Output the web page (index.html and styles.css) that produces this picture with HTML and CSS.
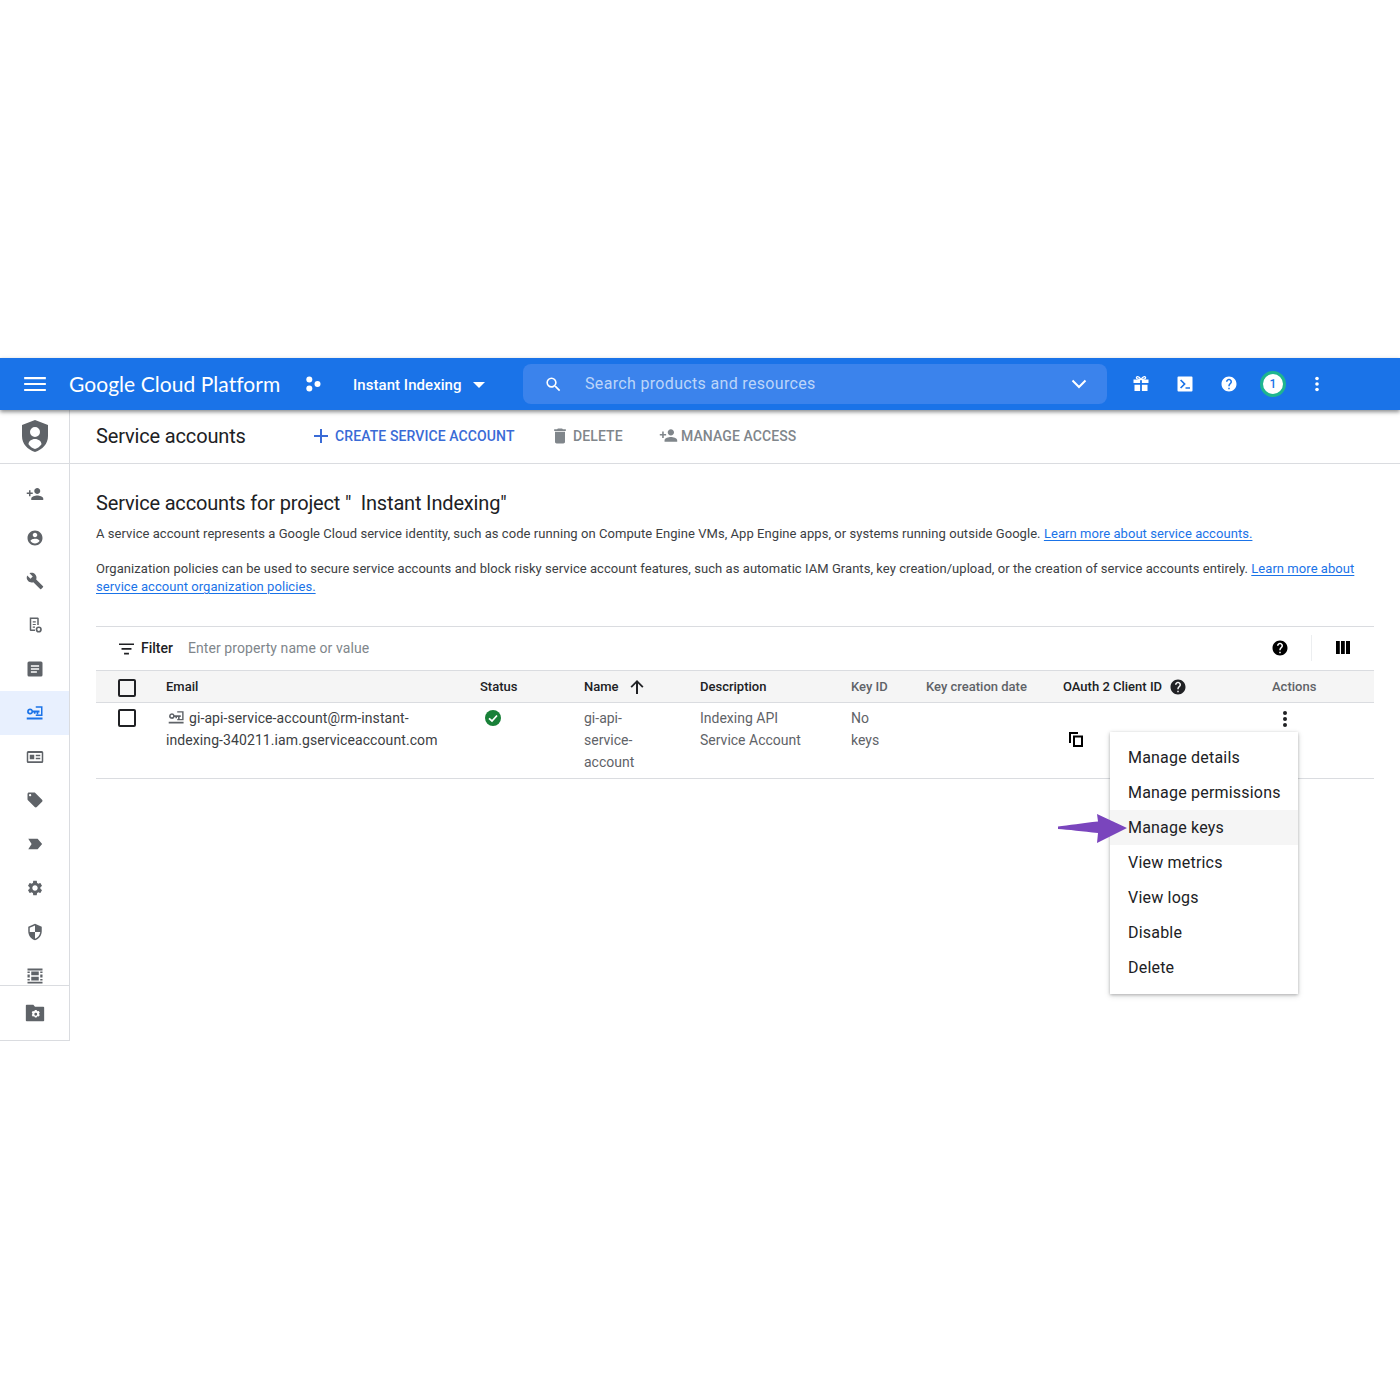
FILE: index.html
```html
<!DOCTYPE html>
<html lang="en">
<head>
<meta charset="utf-8">
<title>Service accounts</title>
<link rel="stylesheet" href="styles.css">
</head>
<body>
<svg class="defs" width="0" height="0" aria-hidden="true">
  <symbol id="i-help" viewBox="0 0 24 24"><path d="M12 2C6.48 2 2 6.48 2 12s4.48 10 10 10 10-4.48 10-10S17.52 2 12 2zm1 17h-2v-2h2v2zm2.07-7.75l-.9.92C13.45 12.9 13 13.5 13 15h-2v-.5c0-1.1.45-2.1 1.17-2.83l1.24-1.26c.37-.36.59-.86.59-1.41 0-1.1-.9-2-2-2s-2 .9-2 2H8c0-2.21 1.79-4 4-4s4 1.79 4 4c0 .88-.36 1.68-.93 2.25z"/></symbol>
  <symbol id="i-padd" viewBox="0 0 24 24"><path d="M15 12c2.21 0 4-1.79 4-4s-1.79-4-4-4-4 1.79-4 4 1.79 4 4 4zm-9-2V7H4v3H1v2h3v3h2v-3h3v-2H6zm9 4c-2.67 0-8 1.34-8 4v2h16v-2c0-2.66-5.33-4-8-4z"/></symbol>
  <symbol id="i-key" viewBox="0 0 24 24"><path d="M13 3h9v13h-9v-2h7V5h-7zM1 18h21v2.5H1z"/><path fill-rule="evenodd" d="M5.5 6a4 4 0 0 1 3.8 2.8H18v2.4h-1.6V14h-2.2v-2.8h-1.5V13h-2.2v-1.8H9.3A4 4 0 1 1 5.500 6zm0 2.200a1.800 1.800 0 1 0 0 3.600 1.800 1.800 0 0 0 0-3.600z"/></symbol>
</svg>

<div class="page">
  <header class="topbar">
    <svg class="ic-menu" viewBox="0 0 24 24"><path d="M2 18.500h20v-2H2zm0-5.500h20v-2H2zM2 5.500v2h20v-2z"/></svg>
    <span class="brand">Google Cloud Platform</span>
    <svg class="ic-dots" viewBox="0 0 16 16"><circle cx="4.300" cy="3.500" r="3"/><circle cx="4.300" cy="12.500" r="3"/><circle cx="12.500" cy="8" r="3"/></svg>
    <span class="project">Instant Indexing</span>
    <span class="caret"></span>
    <div class="search">
      <svg class="ic-search" viewBox="0 0 24 24"><path d="M15.500 14h-.79l-.28-.27A6.471 6.471 0 0 0 16 9.500 6.500 6.500 0 1 0 9.500 16c1.610 0 3.090-.59 4.230-1.570l.27.28v.79l5 4.990L20.490 19l-4.990-5zm-6 0C7.010 14 5 11.990 5 9.500S7.010 5 9.500 5 14 7.010 14 9.500 11.990 14 9.500 14z"/></svg>
      <span class="search-text">Search products and resources</span>
      <svg class="ic-chev" viewBox="0 0 16 10"><path d="M1.500 1.500 8 8l6.500-6.500" fill="none" stroke="#fff" stroke-width="2"/></svg>
    </div>
    <div class="top-icons">
      <svg class="top-ic" viewBox="0 0 18 18"><path d="M1.500 4.500h6.600v3.600H1.500zm8.400 0h6.600v3.600H9.900zM2.500 9.700h5.600v6.300H2.500zm7.400 0h5.600v6.300H9.900z"/><path d="M9 4.500C7 1 4 1 4.500 3.200 4.800 4.400 7 4.500 9 4.500zm0 0c2-3.500 5-3.500 4.500-1.300-.3 1.200-2.500 1.300-4.500 1.300z" fill="none" stroke="#fff" stroke-width="1.300"/></svg>
      <svg class="top-ic" viewBox="0 0 18 18"><path fill-rule="evenodd" d="M2.500 1.500h13a1 1 0 0 1 1 1v13a1 1 0 0 1-1 1h-13a1 1 0 0 1-1-1v-13a1 1 0 0 1 1-1zM4 5.500 7.500 9 4 12.500l1.200 1.100L9.800 9 5.200 4.400zM9.500 12.200v1.500h4.500v-1.500z"/></svg>
      <svg class="top-ic" viewBox="0 0 24 24"><use href="#i-help"/></svg>
      <span class="badge">1</span>
      <svg class="top-ic" viewBox="0 0 18 18"><circle cx="9" cy="3.500" r="1.800"/><circle cx="9" cy="9" r="1.800"/><circle cx="9" cy="14.500" r="1.800"/></svg>
    </div>
  </header>

  <div class="layout">
    <nav class="rail">
      <div class="rail-head">
        <svg class="ic-shield" viewBox="0 0 28 34"><path fill-rule="evenodd" d="M14 1 1 6v11c0 8 5.500 13.500 13 16 7.500-2.500 13-8 13-16V6zM14 8a5 5 0 1 1 0 10 5 5 0 0 1 0-10zm0 12c3.600 0 6.500 2.500 6.500 5.200-1.500 2.200-3.800 3.900-6.500 4.800-2.700-.9-5-2.600-6.500-4.800C7.500 22.500 10.400 20 14 20z"/></svg>
      </div>
      <div class="rail-items">
        <a class="rail-item"><svg viewBox="0 0 24 24"><use href="#i-padd"/></svg></a>
        <a class="rail-item"><svg viewBox="0 0 24 24"><path d="M12 2C6.480 2 2 6.480 2 12s4.480 10 10 10 10-4.480 10-10S17.520 2 12 2zm0 3c1.660 0 3 1.340 3 3s-1.340 3-3 3-3-1.340-3-3 1.340-3 3-3zm0 14.200c-2.500 0-4.710-1.280-6-3.220.03-1.990 4-3.080 6-3.080 1.990 0 5.970 1.090 6 3.080-1.290 1.940-3.500 3.220-6 3.220z"/></svg></a>
        <a class="rail-item"><svg viewBox="0 0 24 24"><path d="M22.700 19l-9.100-9.100c.9-2.300.4-5-1.500-6.900-2-2-5-2.400-7.400-1.300L9 6 6 9 1.600 4.700C.4 7.100.9 10.100 2.900 12.100c1.900 1.900 4.600 2.400 6.900 1.500l9.100 9.100c.4.4 1 .4 1.400 0l2.300-2.300c.5-.4.5-1.100.1-1.400z"/></svg></a>
        <a class="rail-item"><svg viewBox="0 0 24 24"><path fill-rule="evenodd" d="M5 2h11l1 1v9h-2V4H7v14h5v2H6l-1-1zM9 7h4v1.500H9zm0 3.500h4V12H9zM9 14h3v1.500H9z"/><circle cx="17" cy="18" r="3" fill="none" stroke="#5f6368" stroke-width="2.200"/></svg></a>
        <a class="rail-item"><svg viewBox="0 0 24 24"><path fill-rule="evenodd" d="M4 2h16a2 2 0 0 1 2 2v16a2 2 0 0 1-2 2H4a2 2 0 0 1-2-2V4a2 2 0 0 1 2-2zm2.500 5v2h11V7zm0 4v2h11v-2zm0 4v2h8v-2z"/></svg></a>
        <a class="rail-item is-active"><svg viewBox="0 0 24 24"><use href="#i-key"/></svg></a>
        <a class="rail-item"><svg viewBox="0 0 24 24"><path fill-rule="evenodd" d="M3 4h18a2 2 0 0 1 2 2v12a2 2 0 0 1-2 2H3a2 2 0 0 1-2-2V6a2 2 0 0 1 2-2zm0 2.500v11h18v-11zM5 9h6v6H5zm8 0h6v2h-6zm0 4h6v2h-6z"/></svg></a>
        <a class="rail-item"><svg viewBox="0 0 24 24"><path d="M21.410 11.580l-9-9C12.050 2.220 11.550 2 11 2H4c-1.100 0-2 .9-2 2v7c0 .55.22 1.050.59 1.420l9 9c.36.36.86.58 1.410.58.55 0 1.050-.22 1.410-.59l7-7c.37-.36.59-.86.59-1.410 0-.55-.23-1.060-.59-1.420zM5.500 7C4.670 7 4 6.330 4 5.500S4.670 4 5.500 4 7 4.670 7 5.500 6.330 7 5.500 7z"/></svg></a>
        <a class="rail-item"><svg viewBox="0 0 24 24"><path d="M3 5h12.500l6 7-6 7H3l4.500-7z"/></svg></a>
        <a class="rail-item"><svg viewBox="0 0 24 24"><path d="M19.140 12.940c.04-.3.06-.61.06-.94 0-.32-.02-.64-.07-.94l2.030-1.580c.18-.14.23-.41.12-.61l-1.920-3.320c-.12-.22-.37-.29-.59-.22l-2.390.96c-.5-.38-1.030-.7-1.620-.94l-.36-2.540c-.04-.24-.24-.41-.48-.41h-3.840c-.24 0-.43.17-.47.41l-.36 2.540c-.59.24-1.130.57-1.620.94l-2.390-.96c-.22-.08-.47 0-.59.22L2.740 8.870c-.12.21-.08.47.12.61l2.030 1.580c-.05.3-.09.63-.09.94s.02.64.07.94l-2.030 1.580c-.18.14-.23.41-.12.61l1.920 3.320c.12.22.37.29.59.22l2.390-.96c.5.38 1.030.7 1.620.94l.36 2.540c.05.24.24.41.48.41h3.840c.24 0 .44-.17.47-.41l.36-2.540c.59-.24 1.130-.56 1.620-.94l2.390.96c.22.08.47 0 .59-.22l1.920-3.320c.12-.22.07-.47-.12-.61l-2.010-1.580zM12 15.600c-1.980 0-3.600-1.620-3.600-3.600s1.620-3.600 3.600-3.600 3.600 1.620 3.600 3.600-1.620 3.600-3.600 3.600z"/></svg></a>
        <a class="rail-item"><svg viewBox="0 0 24 24"><path d="M12 1L3 5v6c0 5.550 3.840 10.740 9 12 5.160-1.260 9-6.450 9-12V5l-9-4zm0 10.990h7c-.53 4.120-3.280 7.790-7 8.940V12H5V6.300l7-3.110v8.800z"/></svg></a>
        <a class="rail-item"><svg viewBox="0 0 24 24"><path d="M2 2h20v2.500H2zm0 17.500h20V22H2zM2 6h3v2H2zm17 0h3v2h-3zM2 16h3v2H2zm17 0h3v2h-3zM7 6h10v5H7zm0 7h10v5H7zM2 10h3v4H2zm17 0h3v4h-3z"/></svg></a>
      </div>
      <div class="rail-foot">
        <a class="rail-item"><svg viewBox="0 0 24 24"><path fill-rule="evenodd" d="M2 2h8l2 2.500h10a1 1 0 0 1 1 1V21a1 1 0 0 1-1 1H2a1 1 0 0 1-1-1V3a1 1 0 0 1 1-1zm10 6.500-1 1.500-1.800-.3-1.100 1.900 1.100 1.400-1.100 1.400 1.100 1.900 1.800-.3 1 1.500h1.800l1-1.500 1.800.3 1.100-1.900-1.100-1.400 1.100-1.400-1.100-1.900-1.800.3-1-1.500zm.9 3.300a1.700 1.700 0 1 1 0 3.400 1.700 1.700 0 0 1 0-3.400z"/></svg></a>
      </div>
    </nav>

    <main class="main">
      <div class="actionbar">
        <h1 class="page-title">Service accounts</h1>
        <button class="act act-create"><svg viewBox="0 0 14 14"><path d="M6 0h2v6h6v2H8v6H6V8H0V6h6z"/></svg>Create service account</button>
        <button class="act act-delete"><svg viewBox="0 0 24 24"><path d="M6 19c0 1.100.9 2 2 2h8c1.100 0 2-.9 2-2V7H6v12zM19 4h-3.500l-1-1h-5l-1 1H5v2h14V4z"/></svg>Delete</button>
        <button class="act act-access"><svg viewBox="0 0 24 24"><use href="#i-padd"/></svg>Manage access</button>
      </div>

      <div class="content">
        <h2 class="section-title">Service accounts for project "&nbsp; Instant Indexing"</h2>
        <p class="desc">A service account represents a Google Cloud service identity, such as code running on Compute Engine VMs, App Engine apps, or systems running outside Google. <a class="link">Learn more about service accounts.</a></p>
        <p class="desc desc-2">Organization policies can be used to secure service accounts and block risky service account features, such as automatic IAM Grants, key creation/upload, or the creation of service accounts entirely. <a class="link">Learn more about service account organization policies.</a></p>

        <div class="filter">
          <svg class="ic-filter" viewBox="0 0 16 12"><path d="M0 0h16v1.800H0zm2.700 5h10.600v1.800H2.700zm2.700 5h5.200v1.800H5.400z"/></svg>
          <span class="filter-label">Filter</span>
          <span class="filter-hint">Enter property name or value</span>
          <svg class="ic-fhelp" viewBox="0 0 24 24"><use href="#i-help"/></svg>
          <span class="filter-sep"></span>
          <svg class="ic-cols" viewBox="0 0 14 13"><path d="M0 0h3.800v13H0zm5 0h3.800v13H5zm5 0h4v13h-4z"/></svg>
        </div>

        <div class="table">
          <div class="thead">
            <div class="th"><span class="checkbox"></span></div>
            <div class="th th-strong">Email</div>
            <div class="th th-strong">Status</div>
            <div class="th th-strong">Name
              <svg class="ic-sort" viewBox="0 0 14 14"><path d="M7 0 13.500 6.500 12.200 7.800 8 3.600V14H6V3.600L1.800 7.800.5 6.500z"/></svg>
            </div>
            <div class="th th-strong">Description</div>
            <div class="th">Key ID</div>
            <div class="th">Key creation date</div>
            <div class="th th-strong">OAuth 2 Client ID
              <svg class="ic-thelp" viewBox="0 0 24 24"><use href="#i-help"/></svg>
            </div>
            <div class="th">Actions</div>
          </div>
          <div class="tbody">
            <div class="td"><span class="checkbox"></span></div>
            <div class="td td-dark"><svg class="ic-rowkey" viewBox="0 0 24 24"><use href="#i-key"/></svg>gi-api-service-account@rm-instant-indexing-340211.iam.gserviceaccount.com</div>
            <div class="td"><svg class="ic-ok" viewBox="0 0 16 16"><circle cx="8" cy="8" r="8" fill="#188038"/><path d="M4 8.300 7 11l5-5.500" fill="none" stroke="#fff" stroke-width="1.700"/></svg></div>
            <div class="td">gi-api-<br>service-<br>account</div>
            <div class="td">Indexing API<br>Service Account</div>
            <div class="td">No<br>keys</div>
            <div class="td"></div>
            <div class="td td-copy"><svg class="ic-copy" viewBox="0 0 14 15"><path fill-rule="evenodd" d="M0 0h9v2H2v9H0zM4 3.500h10V15H4zm2 2v7.500h6V5.500z"/></svg></div>
            <div class="td td-more"><svg class="ic-more" viewBox="0 0 6 18"><circle cx="3" cy="3" r="2"/><circle cx="3" cy="9" r="2"/><circle cx="3" cy="15" r="2"/></svg></div>
          </div>
        </div>
      </div>
    </main>
  </div>

  <div class="menu">
    <div class="menu-item">Manage details</div>
    <div class="menu-item">Manage permissions</div>
    <div class="menu-item is-hover">Manage keys</div>
    <div class="menu-item">View metrics</div>
    <div class="menu-item">View logs</div>
    <div class="menu-item">Disable</div>
    <div class="menu-item">Delete</div>
  </div>
  <svg class="arrow" viewBox="0 0 70 32"><path d="M0 13.500C10 12.500 25 10 40 8.500L39 1 69 15 39 30 40 20C25 18.500 10 16.500 0 16z"/></svg>
</div>
</body>
</html>
```

FILE: styles.css
```css
* { box-sizing: border-box; }
html, body { margin: 0; background: #fff; }
body { font-family: Roboto, "Liberation Sans", sans-serif; color: #202124; height: 1400px; overflow: hidden; }
svg { display: block; flex: none; }
.defs { position: absolute; }

.page { position: relative; padding-top: 358px; }

/* top bar */
.topbar {
  position: relative; z-index: 2;
  display: flex; align-items: center;
  height: 52px; background: #1a73e8; color: #fff; fill: #fff;
  box-shadow: 0 2px 4px rgba(60,64,67,.6);
}
.ic-menu { width: 26px; height: 26px; margin-left: 22px; }
.brand { margin: -2px 0 0 21px; font: 400 21px/1 Lato, Roboto, sans-serif; width: 236px; letter-spacing: .05px; }
.ic-dots { width: 16px; height: 16px; }
.project { margin-left: 32px; font-size: 15px; font-weight: 500; width: 120px; margin-top: 2px; letter-spacing: .05px; }
.caret { width: 0; height: 0; border: 6.500px solid transparent; border-top: 6.500px solid #fff; border-bottom: 0; margin-top: 2px; }
.search {
  display: flex; align-items: center;
  width: 584px; height: 40px; margin-left: 38px;
  background: #3b83ec; border-radius: 8px;
}
.ic-search { width: 19px; height: 19px; margin-left: 21px; }
.search-text { margin-left: 22px; font-size: 16px; color: #bcd5f9; flex: 1; letter-spacing: .33px; margin-top: -2px; }
.ic-chev { width: 16px; height: 10px; margin-right: 20px; }
.top-icons { display: flex; align-items: center; margin-left: 25px; gap: 26px; }
.top-ic { width: 18px; height: 18px; }
.badge {
  width: 26px; height: 26px; margin: 0 -4px;
  display: flex; align-items: center; justify-content: center;
  border-radius: 50%; background: #fff; border: 3px solid #1fb58f;
  color: #1a73e8; font-size: 12px; font-weight: 500;
}

/* rail */
.layout { display: flex; align-items: flex-start; }
.rail {
  width: 70px; height: 631px; flex: none;
  border-right: 1px solid #dadce0; border-bottom: 1px solid #dadce0;
  fill: #5f6368; display: flex; flex-direction: column;
}
.rail-head { height: 54px; border-bottom: 1px solid #dadce0; display: flex; align-items: center; justify-content: center; flex: none; }
.ic-shield { width: 28px; height: 34px; margin-top: -1px; }
.rail-items { padding-top: 8px; height: 521px; overflow: hidden; flex: none; }
.rail-item { display: flex; align-items: center; justify-content: center; height: 43.800px; }
.rail-item svg { width: 18px; height: 18px; }
.rail-item.is-active { background: #e8f0fe; fill: #1a73e8; }
.rail-foot { border-top: 1px solid #dadce0; padding-top: 5px; }
.rail-foot svg { width: 20px; height: 20px; }

/* action bar */
.main { flex: 1; min-width: 0; }
.actionbar { height: 54px; display: flex; align-items: center; padding: 0 0 2px 26px; border-bottom: 1px solid #dadce0; }
.page-title { margin: 0; font-size: 20px; font-weight: 400; width: 218px; letter-spacing: -.15px; }
.act {
  display: flex; align-items: center; padding: 0; border: 0; background: none;
  font: 500 14px/1 Roboto, sans-serif; letter-spacing: .1px; text-transform: uppercase; color: #80868b; fill: #80868b;
}
.act-create { color: #3a6bd6; fill: #3a6bd6; width: 239px; }
.act-create svg { width: 14px; height: 14px; margin-right: 7px; }
.act-delete { width: 106px; }
.act-delete svg { width: 20px; height: 20px; margin-right: 3px; margin-left: -3px; }
.act-access svg { width: 19px; height: 19px; margin-right: 3px; }

/* content */
.content { padding: 27px 26px 0; }
.section-title { margin: 0; font-size: 20px; line-height: 24px; font-weight: 400; letter-spacing: -.17px; white-space: nowrap; }
.desc { margin: 10px 0 0; font-size: 13px; line-height: 18px; color: #3c4043; letter-spacing: .053px; }
.desc-2 { margin-top: 17px; }
.link { color: #1a73e8; text-decoration: underline; text-underline-offset: 2px; }

/* filter */
.filter {
  display: flex; align-items: center; height: 45px; margin-top: 30px; padding-bottom: 2px;
  border-top: 1px solid #dadce0; border-bottom: 1px solid #dadce0; font-size: 14px;
}
.ic-filter { width: 15px; height: 12px; margin-left: 23px; margin-top: 2px; fill: #202124; }
.filter-label { margin-left: 7px; font-weight: 500; }
.filter-hint { margin-left: 15px; color: #80868b; flex: 1; letter-spacing: .08px; }
.ic-fhelp { width: 18px; height: 18px; fill: #000; }
.filter-sep { width: 1px; height: 26px; background: #eceef0; margin: 0 24px 0 22px; }
.ic-cols { width: 14px; height: 13px; margin-right: 24px; fill: #000; }

/* table */
.thead, .tbody { display: grid; grid-template-columns: 70px 314px 104px 116px 151px 75px 137px 209px 102px; }
.thead { height: 32px; background: #f5f5f5; border-bottom: 1px solid #dadce0; font-size: 13px; font-weight: 500; color: #5f6368; }
.th { display: flex; align-items: center; white-space: nowrap; }
.th-strong { color: #202124; }
.tbody { height: 76px; border-bottom: 1px solid #dadce0; padding-top: 4px; font-size: 14px; line-height: 22px; color: #5f6368; }
.td-dark { color: #3c4043; padding-right: 30px; overflow-wrap: anywhere; letter-spacing: .09px; }
.checkbox { display: block; width: 18px; height: 18px; margin-left: 22px; border: 2px solid #202124; border-radius: 2px; }
.thead .checkbox { margin-top: 2px; }
.tbody .checkbox { margin-top: 2px; }
.ic-sort { width: 14px; height: 14px; margin-left: 11px; fill: #202124; }
.ic-thelp { width: 18px; height: 18px; margin-left: 7px; fill: #202124; }
.ic-rowkey { display: inline-block; width: 17px; height: 17px; margin: 0 4px 0 2px; vertical-align: -3px; fill: #5f6368; }
.ic-ok { width: 16px; height: 16px; margin: 3px 0 0 5px; }
.td-copy { padding: 25px 0 0 6px; }
.ic-copy { width: 14px; height: 15px; fill: #000; }
.ic-more { width: 6px; height: 18px; margin: 3px 0 0 10px; fill: #202124; }

/* menu and annotation */
.menu {
  position: absolute; left: 1110px; top: 732px; z-index: 3; width: 188px; height: 262px; padding: 8px 0;
  background: #fff; box-shadow: 0 1px 3px rgba(60,64,67,.35), 0 2px 6px rgba(60,64,67,.15);
  font-size: 16px; color: #202124;
}
.menu-item { height: 35px; line-height: 35px; padding-left: 18px; white-space: nowrap; letter-spacing: .2px; }
.menu-item.is-hover { background: #f5f5f5; }
.arrow { position: absolute; left: 1058px; top: 813px; z-index: 4; width: 70px; height: 32px; fill: #7a45bd; }
```
